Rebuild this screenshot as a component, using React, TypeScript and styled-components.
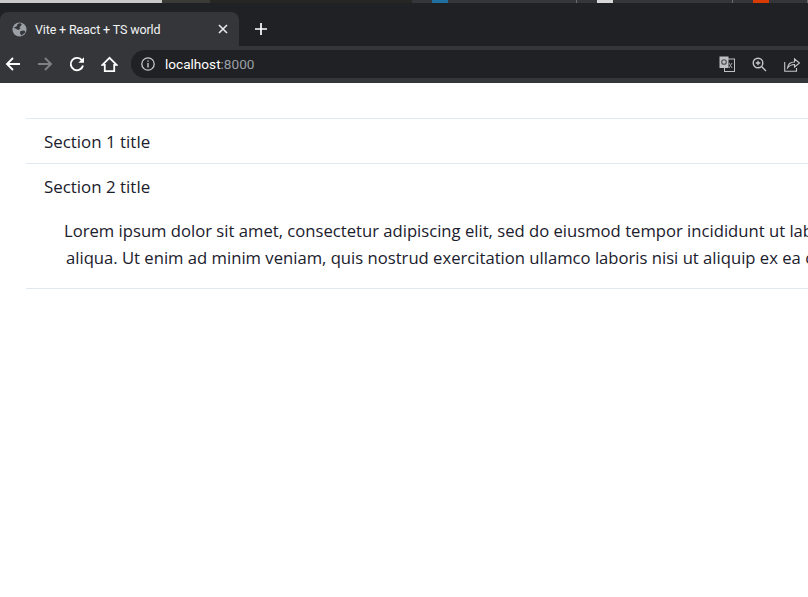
import React from "react";
import styled, { createGlobalStyle } from "styled-components";

const GlobalStyle = createGlobalStyle`
  html, body {
    margin: 0;
    padding: 0;
    width: 808px;
    height: 597px;
    overflow: hidden;
    background: #fff;
  }
`;

const Page = styled.div`
  width: 808px;
  height: 597px;
  overflow: hidden;
  font-family: "Open Sans", "Noto Sans", sans-serif;
`;

const TopStrip = styled.div`
  height: 3px;
  display: flex;
  background: #35363a;
`;

const OtherWindow = styled.div<{ $w: number; $color: string }>`
  width: ${({ $w }) => $w}px;
  background: ${({ $color }) => $color};
`;

const StripTab = styled.div<{ $w: number; $color: string }>`
  width: ${({ $w }) => $w}px;
  display: flex;
  padding-left: 20px;
  box-sizing: border-box;
  border-right: 1px solid #6a6b6e;

  &::before {
    content: "";
    width: 16px;
    height: 3px;
    background: ${({ $color }) => $color};
  }
`;

const TabBar = styled.div`
  height: 43px;
  background: #202124;
  display: flex;
  align-items: flex-end;
`;

const ActiveTab = styled.div`
  width: 239px;
  height: 34px;
  background: #35363a;
  border-radius: 8px 8px 0 0;
  display: flex;
  align-items: center;
  padding: 0 11px 0 12px;
  box-sizing: border-box;
  color: #fff;
`;

const TabTitle = styled.span`
  margin-left: 8px;
  flex: 1;
  font-family: "Roboto", "Liberation Sans", sans-serif;
  font-size: 12.5px;
  letter-spacing: -0.14px;
  white-space: nowrap;
  color: #f1f3f4;
`;

const NewTab = styled.div`
  width: 44px;
  height: 34px;
  display: flex;
  align-items: center;
  justify-content: center;
`;

const Toolbar = styled.div`
  height: 37px;
  background: #35363a;
  display: flex;
  align-items: flex-start;
`;

const NavButtons = styled.div`
  width: 131px;
  height: 36px;
  display: flex;
  align-items: center;
  gap: 16px;
  padding: 0 0 0 5px;
  box-sizing: border-box;
`;

const Omnibox = styled.div`
  flex: 1;
  height: 28px;
  margin-top: 4px;
  background: #202124;
  border-radius: 14px 0 0 14px;
  display: flex;
  align-items: center;
  padding: 0 8px 0 10px;
`;

const Url = styled.div`
  flex: 1;
  margin-left: 10px;
  font-family: "Roboto", "Liberation Sans", sans-serif;
  font-size: 13.6px;
  color: #fff;
  white-space: nowrap;

  span {
    color: #9aa0a6;
  }
`;

const OmniActions = styled.div`
  display: flex;
  align-items: center;
  gap: 17px;
`;

const Content = styled.main`
  padding: 35px 0 0 26px;
  color: #1a202c;
`;

const Section = styled.section`
  border-top: 1px solid #e2e8f0;

  &:last-child {
    border-bottom: 1px solid #e2e8f0;
  }
`;

const SectionTitle = styled.div`
  height: 44px;
  display: flex;
  align-items: center;
  padding: 1px 0 0 18px;
  box-sizing: border-box;
  font-size: 16.9px;
  white-space: nowrap;
`;

const SectionBody = styled.div`
  padding: 9px 0 17px;
`;

const BodyLine = styled.div<{ $indent: number }>`
  padding-left: ${({ $indent }) => $indent}px;
  font-size: 16.65px;
  line-height: 27px;
  white-space: nowrap;
`;

const Globe = () => (
  <svg width="15" height="15" viewBox="0 0 16 16">
    <circle cx="8" cy="8" r="7.5" fill="#9aa0a6" />
    <path
      d="M1.5 6 L5 4.5 L6 2 L9 1 L10.5 3 L8 5.5 L9 7 L6.5 8.5 L4 7 Z M9 9.5 L13 9 L14.5 11 L10 14.5 L8.5 12 Z"
      fill="#35363a"
    />
  </svg>
);

const CloseIcon = () => (
  <svg width="10" height="10" viewBox="0 0 10 10">
    <path d="M1 1 L9 9 M9 1 L1 9" stroke="#e8eaed" strokeWidth="1.6" />
  </svg>
);

const PlusIcon = () => (
  <svg width="12" height="12" viewBox="0 0 12 12">
    <path d="M6 0 V12 M0 6 H12" stroke="#fff" strokeWidth="1.7" />
  </svg>
);

const Arrow = ({ color, flip }: { color: string; flip?: boolean }) => (
  <svg width="16" height="16" viewBox="0 0 16 16" style={flip ? { transform: "scaleX(-1)" } : undefined}>
    <path d="M15 8 H2 M8 2 L2 8 L8 14" stroke={color} strokeWidth="1.9" fill="none" />
  </svg>
);

const Reload = () => (
  <svg width="16" height="16" viewBox="0 0 16 16">
    <path d="M13 4.4 A6.2 6.2 0 1 0 14 9.5" stroke="#fff" strokeWidth="1.9" fill="none" />
    <path d="M15 1.2 V6.8 H9.4 Z" fill="#fff" />
  </svg>
);

const Home = () => (
  <svg width="17" height="17" viewBox="0 0 18 18">
    <path d="M9 2 L1.5 9.5 H4 V16 H14 V9.5 H16.5 Z" stroke="#fff" strokeWidth="1.9" fill="none" />
  </svg>
);

const Info = () => (
  <svg width="14" height="14" viewBox="0 0 14 14">
    <circle cx="7" cy="7" r="6.2" stroke="#c4c7ca" strokeWidth="1.3" fill="none" />
    <path d="M7 6 V10.5 M7 3.4 V4.8" stroke="#c4c7ca" strokeWidth="1.4" />
  </svg>
);

const Translate = () => (
  <svg width="16" height="16" viewBox="0 0 16 16">
    <rect x="5.5" y="3" width="10" height="12.5" fill="none" stroke="#bdc1c6" />
    <rect x="0.5" y="0.5" width="9" height="11.5" fill="#bdc1c6" />
    <circle cx="5" cy="6" r="2.3" fill="none" stroke="#4a4a4a" strokeWidth="1.1" />
    <path d="M10 7 L13 12 M13 7 L10 12" stroke="#9aa0a6" />
  </svg>
);

const Zoom = () => (
  <svg width="15" height="15" viewBox="0 0 15 15">
    <circle cx="6" cy="6" r="4.8" stroke="#c4c7ca" strokeWidth="1.4" fill="none" />
    <path d="M9.5 9.5 L14 14 M6 3.7 V8.3 M3.7 6 H8.3" stroke="#c4c7ca" strokeWidth="1.3" />
  </svg>
);

const Share = () => (
  <svg width="16" height="15" viewBox="0 0 16 15">
    <path d="M0.7 5 V14.3 H12.5 V11" stroke="#c4c7ca" strokeWidth="1.1" fill="none" />
    <path d="M3.5 11 C4 7 7 5 10.5 5 V2 L15.5 6 L10.5 10 V7.5 C8 7.5 5.5 8.5 3.5 11 Z" stroke="#c4c7ca" strokeWidth="1.1" fill="none" />
  </svg>
);

const App = () => (
  <Page>
    <GlobalStyle />
    <TopStrip>
      <OtherWindow $w={162} $color="#c8c8c8" />
      <OtherWindow $w={48} $color="#3a3a37" />
      <OtherWindow $w={202} $color="#262624" />
      <StripTab $w={165} $color="#1f6f9f" />
      <StripTab $w={156} $color="#d8d8d8" />
      <StripTab $w={75} $color="#d83b01" />
    </TopStrip>
    <TabBar>
      <ActiveTab>
        <Globe />
        <TabTitle>Vite + React + TS world</TabTitle>
        <CloseIcon />
      </ActiveTab>
      <NewTab>
        <PlusIcon />
      </NewTab>
    </TabBar>
    <Toolbar>
      <NavButtons>
        <Arrow color="#fff" />
        <Arrow color="#7e8083" flip />
        <Reload />
        <Home />
      </NavButtons>
      <Omnibox>
        <Info />
        <Url>
          localhost<span>:8000</span>
        </Url>
        <OmniActions>
          <Translate />
          <Zoom />
          <Share />
        </OmniActions>
      </Omnibox>
    </Toolbar>
    <Content>
      <Section>
        <SectionTitle>Section 1 title</SectionTitle>
      </Section>
      <Section>
        <SectionTitle>Section 2 title</SectionTitle>
        <SectionBody>
          <BodyLine $indent={38}>
            Lorem ipsum dolor sit amet, consectetur adipiscing elit, sed do eiusmod tempor incididunt ut labore et dolore magna
          </BodyLine>
          <BodyLine $indent={40}>
            aliqua. Ut enim ad minim veniam, quis nostrud exercitation ullamco laboris nisi ut aliquip ex ea commodo consequat.
          </BodyLine>
        </SectionBody>
      </Section>
    </Content>
  </Page>
);

export default App;
